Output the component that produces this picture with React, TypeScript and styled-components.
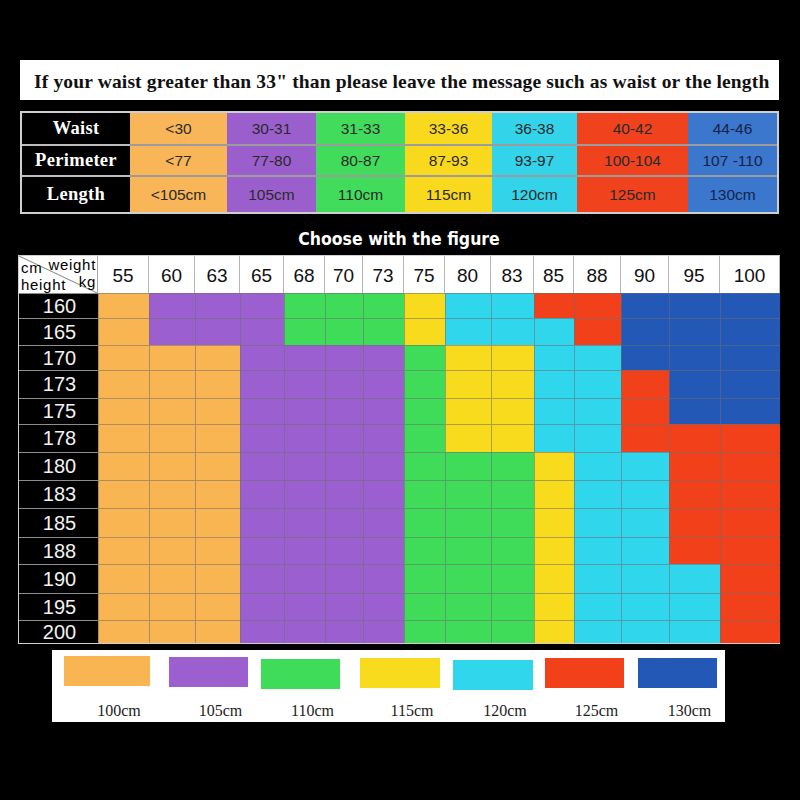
import React from 'react'
import styled, { createGlobalStyle } from 'styled-components'

const GlobalStyle = createGlobalStyle`
  html, body {
    margin: 0;
    padding: 0;
    background: #000;
  }
  * {
    box-sizing: border-box;
  }
`

const COLORS: Record<string, string> = {
  O: '#f8b552',
  P: '#9b5fcf',
  G: '#3fdc5a',
  Y: '#f8db1c',
  C: '#30d6ec',
  R: '#f2401a',
  B: '#2358b7',
}

const SIZE_COLS = [
  { bg: '#f8b658', w: 97, waist: '<30', perim: '<77', len: '<105cm' },
  { bg: '#9a5fcd', w: 89, waist: '30-31', perim: '77-80', len: '105cm' },
  { bg: '#42dc5c', w: 89, waist: '31-33', perim: '80-87', len: '110cm' },
  { bg: '#f8d91e', w: 87, waist: '33-36', perim: '87-93', len: '115cm' },
  { bg: '#33d4ea', w: 85, waist: '36-38', perim: '93-97', len: '120cm' },
  { bg: '#f0421c', w: 111, waist: '40-42', perim: '100-104', len: '125cm' },
  { bg: '#3a77cd', w: 89, waist: '44-46', perim: '107 -110', len: '130cm', dark: true },
]

const WEIGHTS = [
  { kg: 55, w: 51 },
  { kg: 60, w: 46 },
  { kg: 63, w: 45 },
  { kg: 65, w: 44 },
  { kg: 68, w: 41 },
  { kg: 70, w: 38 },
  { kg: 73, w: 41 },
  { kg: 75, w: 41 },
  { kg: 80, w: 46 },
  { kg: 83, w: 43 },
  { kg: 85, w: 40 },
  { kg: 88, w: 47 },
  { kg: 90, w: 48 },
  { kg: 95, w: 51 },
  { kg: 100, w: 60 },
]

const HEIGHTS = [
  { cm: 160, h: 25, fill: 'OPPPGGGYCCRRBBB' },
  { cm: 165, h: 27, fill: 'OPPPGGGYCCCRBBB' },
  { cm: 170, h: 25, fill: 'OOOPPPPGYYCCBBB' },
  { cm: 173, h: 28, fill: 'OOOPPPPGYYCCRBB' },
  { cm: 175, h: 26, fill: 'OOOPPPPGYYCCRBB' },
  { cm: 178, h: 28, fill: 'OOOPPPPGYYCCRRR' },
  { cm: 180, h: 28, fill: 'OOOPPPPGGGYCCRR' },
  { cm: 183, h: 28, fill: 'OOOPPPPGGGYCCRR' },
  { cm: 185, h: 29, fill: 'OOOPPPPGGGYCCRR' },
  { cm: 188, h: 27, fill: 'OOOPPPPGGGYCCRR' },
  { cm: 190, h: 29, fill: 'OOOPPPPGGGYCCCR' },
  { cm: 195, h: 27, fill: 'OOOPPPPGGGYCCCR' },
  { cm: 200, h: 23, fill: 'OOOPPPPGGGYCCCR' },
]

const LEGEND = [
  { c: 'O', label: '100cm', col: 105, sw: 86, top: 6 },
  { c: 'P', label: '105cm', col: 92, sw: 79, top: 7 },
  { c: 'G', label: '110cm', col: 99, sw: 79, top: 9 },
  { c: 'Y', label: '115cm', col: 93, sw: 80, top: 8 },
  { c: 'C', label: '120cm', col: 92, sw: 80, top: 10 },
  { c: 'R', label: '125cm', col: 93, sw: 79, top: 8 },
  { c: 'B', label: '130cm', col: 87, sw: 79, top: 8 },
]

const Page = styled.div`
  width: 800px;
  height: 800px;
  background: #000;
  padding-top: 60px;
  display: flex;
  flex-direction: column;
`

const Banner = styled.div`
  margin-left: 20px;
  width: 759px;
  height: 40px;
  background: #fff;
  display: flex;
  align-items: center;
  padding: 3px 0 0 14px;
  font-family: 'Liberation Serif', 'DejaVu Serif', serif;
  font-weight: bold;
  font-size: 19.5px;
  letter-spacing: 0.15px;
  color: #111;
  white-space: nowrap;
`

const SizeTable = styled.div`
  margin: 11px 0 0 20px;
  width: 759px;
  border: 2px solid #cfcfcf;
  display: grid;
  grid-template-columns: 108px ${SIZE_COLS.map(c => `${c.w}px`).join(' ')};
  grid-template-rows: 31px 31px 37px;
`

const RowLabel = styled.div<{ $first?: boolean }>`
  background: #000;
  color: #fff;
  display: flex;
  align-items: center;
  justify-content: center;
  font-family: 'Liberation Serif', 'DejaVu Serif', serif;
  font-weight: bold;
  font-size: 18.5px;
  letter-spacing: 0.3px;
  border-top: ${p => (p.$first ? 'none' : '2px solid #bdbdbd')};
`

const SizeCell = styled.div<{ $bg: string; $first?: boolean; $dark?: boolean }>`
  background: ${p => p.$bg};
  color: ${p => (p.$dark ? '#16234a' : '#2a2a2a')};
  display: flex;
  align-items: center;
  justify-content: center;
  font-family: 'Liberation Sans', Arial, sans-serif;
  font-size: 15.5px;
  border-top: ${p => (p.$first ? 'none' : '2px solid #9c9c9c')};
`

const Title = styled.div`
  margin-top: 15px;
  height: 20px;
  text-align: center;
  color: #fff;
  font-family: 'DejaVu Sans Condensed', 'DejaVu Sans', sans-serif;
  font-weight: bold;
  font-size: 17.5px;
  line-height: 20px;
  padding-right: 2px;
`

const Chart = styled.div`
  margin: 6px 0 0 18px;
  width: 762px;
  border: 1px solid #cfcfcf;
  display: grid;
  grid-template-columns: 79px ${WEIGHTS.map(w => `${w.w}px`).join(' ')};
  grid-template-rows: 37px ${HEIGHTS.map(h => `${h.h}px`).join(' ')};
`

// diagonal header cell: labels laid on a 1px row grid so they can stagger
const Corner = styled.div`
  background: #fff
    linear-gradient(
      to top right,
      transparent calc(50% - 1px),
      #8a8a8a 50%,
      transparent calc(50% + 1px)
    );
  border-right: 1px solid #aaa;
  font-family: 'Liberation Sans', Arial, sans-serif;
  font-size: 15px;
  line-height: 17px;
  letter-spacing: 0.7px;
  color: #000;
  display: grid;
  grid-template-columns: 1fr;
  grid-template-rows: repeat(37, 1px);
  padding: 0 1px 0 2px;
`

const CornerText = styled.span<{ $row: number; $right?: boolean }>`
  grid-column: 1;
  grid-row: ${p => p.$row} / span 17;
  justify-self: ${p => (p.$right ? 'end' : 'start')};
  white-space: nowrap;
`

const WeightHead = styled.div`
  background: #fff;
  border-right: 1px solid #b5b5b5;
  display: flex;
  align-items: center;
  justify-content: center;
  font-family: 'Liberation Sans', Arial, sans-serif;
  font-size: 19px;
  color: #111;
  padding-top: 3px;

  &:last-child {
    border-right: none;
  }
`

const HeightLabel = styled.div`
  background: #000;
  color: #f2f2f2;
  border-top: 1px solid #8d8d8d;
  display: flex;
  align-items: center;
  justify-content: center;
  font-family: 'Liberation Sans', Arial, sans-serif;
  font-size: 20px;
  padding-left: 2px;
`

const Cell = styled.div<{ $color: string }>`
  background: ${p => p.$color};
  border-top: 1px solid rgba(110, 110, 110, 0.55);
  border-left: 1px solid rgba(110, 110, 110, 0.55);
`

const Legend = styled.div`
  margin: 6px 0 0 52px;
  width: 673px;
  height: 72px;
  background: #fff;
  padding-left: 12px;
  display: flex;
`

const LegendItem = styled.div`
  display: flex;
  flex-direction: column;
`

const Swatch = styled.div<{ $color: string; $w: number; $top: number }>`
  width: ${p => p.$w}px;
  height: 30px;
  margin-top: ${p => p.$top}px;
  background: ${p => p.$color};
`

const LegendLabel = styled.div<{ $w: number; $top: number }>`
  width: ${p => p.$w}px;
  margin-top: ${p => 22 - p.$top}px;
  padding-left: 24px;
  text-align: center;
  font-family: 'Liberation Serif', 'DejaVu Serif', serif;
  font-size: 16px;
  color: #222;
`

export default function App() {
  return (
    <>
      <GlobalStyle />
      <Page>
        <Banner>
          If your waist greater than 33&quot; than please leave the message such as waist or the length
        </Banner>

        <SizeTable>
          <RowLabel $first>Waist</RowLabel>
          {SIZE_COLS.map(c => (
            <SizeCell key={`w${c.waist}`} $bg={c.bg} $dark={c.dark} $first>
              {c.waist}
            </SizeCell>
          ))}
          <RowLabel>Perimeter</RowLabel>
          {SIZE_COLS.map(c => (
            <SizeCell key={`p${c.perim}`} $bg={c.bg} $dark={c.dark}>
              {c.perim}
            </SizeCell>
          ))}
          <RowLabel>Length</RowLabel>
          {SIZE_COLS.map(c => (
            <SizeCell key={`l${c.len}`} $bg={c.bg} $dark={c.dark}>
              {c.len}
            </SizeCell>
          ))}
        </SizeTable>

        <Title>Choose with the figure</Title>

        <Chart>
          <Corner>
            <CornerText $row={1} $right>
              weight
            </CornerText>
            <CornerText $row={4}>cm</CornerText>
            <CornerText $row={18} $right>
              kg
            </CornerText>
            <CornerText $row={21}>height</CornerText>
          </Corner>
          {WEIGHTS.map(w => (
            <WeightHead key={w.kg}>{w.kg}</WeightHead>
          ))}
          {HEIGHTS.map(row => (
            <React.Fragment key={row.cm}>
              <HeightLabel>{row.cm}</HeightLabel>
              {row.fill.split('').map((c, i) => (
                <Cell key={i} $color={COLORS[c]} />
              ))}
            </React.Fragment>
          ))}
        </Chart>

        <Legend>
          {LEGEND.map(l => (
            <LegendItem key={l.label} style={{ width: l.col }}>
              <Swatch $color={COLORS[l.c]} $w={l.sw} $top={l.top} />
              <LegendLabel $w={l.sw} $top={l.top}>
                {l.label}
              </LegendLabel>
            </LegendItem>
          ))}
        </Legend>
      </Page>
    </>
  )
}
